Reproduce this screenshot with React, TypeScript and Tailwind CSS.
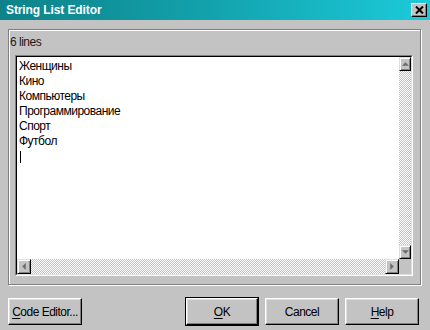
import React from "react";

const ITEMS = ["Женщины", "Кино", "Компьютеры", "Программирование", "Спорт", "Футбол"];

const BEVEL =
  "border border-t-white border-l-white border-r-black border-b-black shadow-[inset_-1px_-1px_0_#808080,inset_1px_1px_0_#dfdfdf]";
const SCROLL_BTN =
  "bg-[#c3c3c3] border border-t-[#dfdfdf] border-l-[#dfdfdf] border-r-black border-b-black shadow-[inset_1px_1px_0_#fff,inset_-1px_-1px_0_#808080] flex items-center justify-center";
const TRACK = "bg-[repeating-conic-gradient(#c3c3c3_0%_25%,#ffffff_0%_50%)] bg-[length:2px_2px]";

function Arrow({ dir }: { dir: "up" | "down" | "left" | "right" }) {
  const pts = {
    up: "0,3 3,0 6,3",
    down: "0,0 6,0 3,3",
    left: "3,0 3,6 0,3",
    right: "0,0 0,6 3,3",
  }[dir];
  const vertical = dir === "up" || dir === "down";
  return (
    <svg width={vertical ? 7 : 4} height={vertical ? 4 : 7} viewBox={vertical ? "0 0 6 3" : "0 0 3 6"}>
      <polygon points={pts} fill="#6b6b6b" />
    </svg>
  );
}

function Btn({ children, className = "" }: { children: React.ReactNode; className?: string }) {
  return (
    <div
      className={`h-[27px] bg-[#c3c3c3] flex items-center justify-center whitespace-nowrap text-black ${BEVEL} ${className}`}
    >
      {children}
    </div>
  );
}

export default function App() {
  return (
    <div className="w-[430px] h-[330px] overflow-hidden bg-[#c3c3c3] font-['Liberation_Sans',Arial,sans-serif] text-[12px] tracking-[-0.5px] text-black flex flex-col">
      {/* title bar */}
      <div className="h-[20px] shrink-0 flex items-center justify-between pl-[6px] pr-[3px] bg-gradient-to-r from-[#0e8288] via-[#13a3ae] to-[#1ccbda]">
        <span className="text-white font-bold text-[12px] tracking-[-0.1px]">String List Editor</span>
        <div className="w-[16px] h-[14px] bg-[#c3c3c3] border border-t-white border-l-white border-r-black border-b-black shadow-[inset_-1px_-1px_0_#808080] flex items-center justify-center">
          <svg width="9" height="8" viewBox="0 0 9 8">
            <path d="M1 0.5 L8 7.5 M8 0.5 L1 7.5" stroke="#000" strokeWidth="2" />
          </svg>
        </div>
      </div>

      <div className="flex-1 px-[8px] pt-[9px]">
        {/* group frame */}
        <div className="w-[413px] h-[256px] border border-[#808080] shadow-[inset_1px_1px_0_#fff,1px_1px_0_#fff] flex flex-col">
          <div className="h-[25px] pl-[1px] pt-[5px] leading-[14px] text-[#1a1a1a]">6 lines</div>
          <div className="ml-[6px] w-[398px] h-[221px] border border-t-[#808080] border-l-[#808080] border-r-white border-b-white">
            <div className="w-full h-full border border-t-black border-l-black border-r-[#dfdfdf] border-b-[#dfdfdf] grid grid-cols-[1fr_12px] grid-rows-[1fr_15px]">
              <div className="bg-white pl-[2px] pt-[2px] leading-[15px] overflow-hidden">
                {ITEMS.map((t) => (
                  <div key={t}>{t}</div>
                ))}
                <div className="h-[15px] flex items-center">
                  <div className="w-[1px] h-[12px] bg-black ml-[1px]" />
                </div>
              </div>
              <div className={`flex flex-col ${TRACK}`}>
                <div className={`h-[14px] ${SCROLL_BTN}`}>
                  <Arrow dir="up" />
                </div>
                <div className="flex-1" />
                <div className={`h-[14px] ${SCROLL_BTN}`}>
                  <Arrow dir="down" />
                </div>
              </div>
              <div className={`flex ${TRACK}`}>
                <div className={`w-[14px] ${SCROLL_BTN}`}>
                  <Arrow dir="left" />
                </div>
                <div className="flex-1" />
                <div className={`w-[14px] ${SCROLL_BTN}`}>
                  <Arrow dir="right" />
                </div>
              </div>
              <div className="bg-[#c3c3c3]" />
            </div>
          </div>
        </div>

        {/* buttons */}
        <div className="mt-[12px] pr-[3px] flex items-center justify-between">
          <Btn className="w-[74px]">
            <span>
              <span className="underline underline-offset-2">C</span>ode Editor...
            </span>
          </Btn>
          <div className="flex items-center gap-[6px]">
            <div className="w-[74px] h-[29px] border border-black flex">
              <Btn className="flex-1">
                <span>
                  <span className="underline underline-offset-2">O</span>K
                </span>
              </Btn>
            </div>
            <Btn className="w-[74px]">Cancel</Btn>
            <Btn className="w-[74px]">
              <span>
                <span className="underline underline-offset-2">H</span>elp
              </span>
            </Btn>
          </div>
        </div>
      </div>
    </div>
  );
}
